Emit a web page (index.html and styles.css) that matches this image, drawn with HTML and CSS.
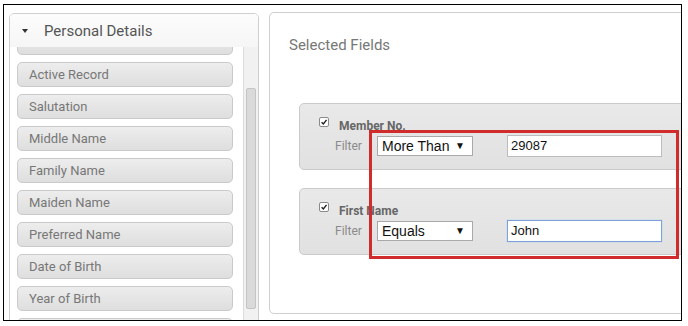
FILE: index.html
```html
<!DOCTYPE html>
<html lang="en">
  <head>
    <meta charset="utf-8" />
    <title>Report Filter - Selected Fields</title>
    <link rel="stylesheet" href="styles.css">
  </head>
  <body>
    <div class="frame">
      <!-- Field picker -->
      <div class="picker">
        <div class="picker-header">
          <span class="caret"></span>
          <span class="picker-title">Personal Details</span>
        </div>
        <div class="picker-body">
          <div class="picker-viewport">
            <ul class="field-list">
              <li class="field-item"></li>
              <li class="field-item">Active Record</li>
              <li class="field-item">Salutation</li>
              <li class="field-item">Middle Name</li>
              <li class="field-item">Family Name</li>
              <li class="field-item">Maiden Name</li>
              <li class="field-item">Preferred Name</li>
              <li class="field-item">Date of Birth</li>
              <li class="field-item">Year of Birth</li>
              <li class="field-item"></li>
            </ul>
          </div>
          <div class="scroll-track">
            <div class="scroll-thumb"></div>
          </div>
        </div>
      </div>

      <!-- Selected fields -->
      <div class="selected">
        <div class="selected-title">Selected Fields</div>

        <div class="field-box">
          <div class="field-head">
            <span class="check">
              <svg viewBox="0 0 10 10"><path d="M2 5.2 L4.2 7.4 L8.2 2.4" /></svg>
            </span>
            <span class="field-name">Member No.</span>
          </div>
          <div class="filter-row">
            <span class="filter-label">Filter</span>
            <div class="select">More Than <span class="arrow">&#9660;</span></div>
            <div class="text-input">29087</div>
          </div>
        </div>

        <div class="field-box">
          <div class="field-head">
            <span class="check">
              <svg viewBox="0 0 10 10"><path d="M2 5.2 L4.2 7.4 L8.2 2.4" /></svg>
            </span>
            <span class="field-name">First Name</span>
          </div>
          <div class="filter-row">
            <span class="filter-label">Filter</span>
            <div class="select">Equals <span class="arrow">&#9660;</span></div>
            <div class="text-input focused">John</div>
          </div>
        </div>
      </div>

      <!-- Highlight annotation -->
      <div class="highlight"></div>
    </div>
  </body>
</html>
```

FILE: styles.css
```css
/* Page */
body {
  margin: 0;
  padding: 4px 0 0 3px;
  background: #fff;
  font-family: Roboto, 'Liberation Sans', sans-serif;
  -webkit-font-smoothing: antialiased;
}

.frame {
  position: relative;
  box-sizing: border-box;
  width: 679px;
  height: 317px;
  border: 1px solid #000;
  overflow: hidden;
  display: flex;
  align-items: flex-start;
  padding-left: 5px;
}

/* Field picker */
.picker {
  flex: 0 0 250px;
  box-sizing: border-box;
  height: 330px;
  margin-top: 8px;
  border: 1px solid #cfcfcf;
  border-radius: 5px;
  overflow: hidden;
  display: flex;
  flex-direction: column;
}

.picker-header {
  height: 33px;
  background: linear-gradient(#fcfcfc, #f6f6f6);
  display: flex;
  align-items: center;
  padding-left: 12px;
}

.caret {
  width: 0;
  height: 0;
  border-left: 3px solid transparent;
  border-right: 3px solid transparent;
  border-top: 4px solid #333;
  margin-right: 16px;
}

.picker-title {
  font-size: 15px;
  color: #555;
}

.picker-body {
  flex: 1;
  display: flex;
  min-height: 0;
}

.picker-viewport {
  flex: 1;
  overflow: hidden;
  padding-left: 7px;
}

.field-list {
  list-style: none;
  margin: -17px 0 0 0;
  padding: 0;
  display: flex;
  flex-direction: column;
  gap: 7px;
  width: 216px;
}

.field-item {
  box-sizing: border-box;
  height: 25px;
  line-height: 23px;
  padding-left: 11px;
  border: 1px solid #cacaca;
  border-radius: 5px;
  background: linear-gradient(#ededed, #dedede);
  font-size: 13px;
  color: #777;
}

.scroll-track {
  flex: 0 0 15px;
  box-sizing: border-box;
  border-left: 1px solid #dcdcdc;
  background: #f1f1f1;
  padding: 41px 2px 0 2px;
}

.scroll-thumb {
  height: 221px;
  box-sizing: border-box;
  border: 1px solid #c4c4c4;
  border-radius: 2px;
  background: #dadada;
}

/* Selected fields */
.selected {
  flex: 0 0 430px;
  box-sizing: border-box;
  height: 302px;
  margin: 7px 0 0 10px;
  border: 1px solid #cfcfcf;
  border-radius: 5px;
  padding: 22px 0 0 19px;
}

.selected-title {
  font-size: 15px;
  line-height: 20px;
  color: #777;
  margin-bottom: 48px;
}

.field-box {
  box-sizing: border-box;
  height: 67px;
  width: 410px;
  border: 1px solid #cacaca;
  border-radius: 5px;
  background: linear-gradient(#e9e9e9, #e1e1e1);
  padding: 9px 0 0 19px;
  margin: 0 0 18px 10px;
}

.field-head {
  display: flex;
  align-items: center;
  height: 22px;
}

.check {
  box-sizing: border-box;
  width: 10px;
  height: 10px;
  border: 1px solid #8a8a8a;
  border-radius: 2px;
  background: #fff;
  display: flex;
  margin-right: 10px;
  margin-top: -4px;
}

.check svg {
  width: 8px;
  height: 8px;
  fill: none;
  stroke: #222;
  stroke-width: 1.8;
}

.field-name {
  font-size: 12px;
  font-weight: 700;
  color: #666;
  padding-top: 3px;
}

.filter-row {
  display: flex;
  align-items: center;
  height: 22px;
  padding-left: 16px;
}

.filter-label {
  font-size: 12px;
  color: #8a8a8a;
  width: 42px;
}

.select {
  position: relative;
  box-sizing: border-box;
  width: 96px;
  height: 20px;
  line-height: 18px;
  border: 1px solid #a9a9a9;
  background: #fff;
  padding-left: 4px;
  font-family: 'Liberation Sans', Arial, sans-serif;
  font-size: 14px;
  color: #111;
  margin-right: 34px;
}

.select .arrow {
  position: absolute;
  right: 7px;
  top: 0;
  font-size: 10px;
  color: #111;
}

.text-input {
  box-sizing: border-box;
  width: 155px;
  height: 22px;
  line-height: 20px;
  border: 1px solid #bcbcbc;
  background: #fff;
  padding-left: 3px;
  font-family: 'Liberation Sans', Arial, sans-serif;
  font-size: 13px;
  color: #111;
}

.text-input.focused {
  border-color: #7da2d8;
  box-shadow: 0 0 1px #9cbbe6;
}

/* Red annotation box */
.highlight {
  position: absolute;
  left: 365px;
  top: 125px;
  width: 310px;
  height: 129px;
  box-sizing: border-box;
  border: 3px solid #d02c2c;
}
```
